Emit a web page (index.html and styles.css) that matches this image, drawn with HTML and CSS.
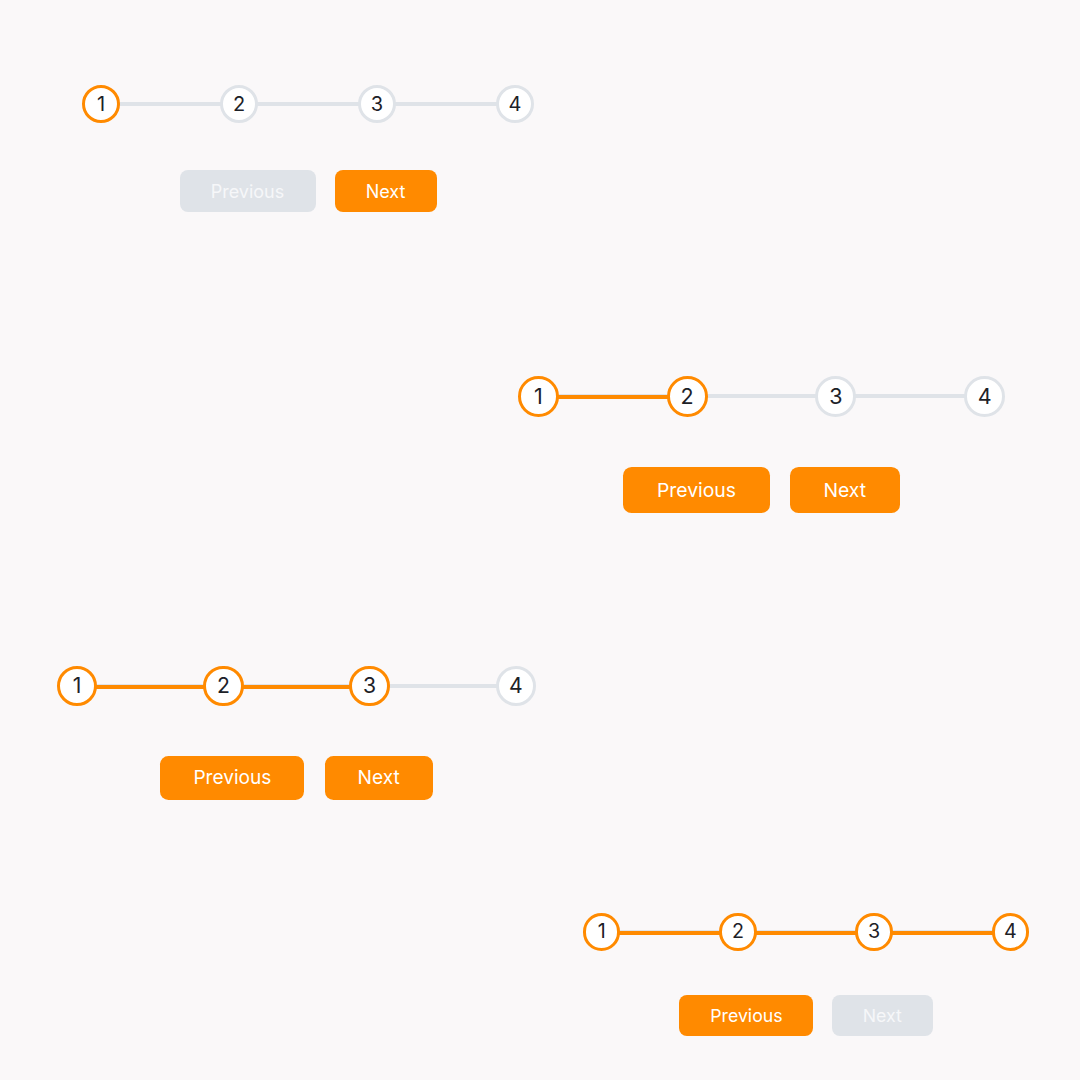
FILE: index.html
```html
<!DOCTYPE html>
<html lang="en">

<head>
    <meta charset="UTF-8">
    <meta name="viewport" content="width=device-width, initial-scale=1.0">
    <title>Progress steps</title>
    <link rel="stylesheet" href="styles.css">
</head>

<body>
    <main class="page">

        <!-- step 1 -->
        <section class="progress progress-one">
            <div class="steps">
                <div class="steps-track"><div class="steps-bar" style="width: 0%"></div></div>
                <div class="circle active">1</div>
                <div class="circle">2</div>
                <div class="circle">3</div>
                <div class="circle">4</div>
            </div>
            <div class="controls">
                <button class="btn btn-prev" disabled>Previous</button>
                <button class="btn btn-next">Next</button>
            </div>
        </section>

        <!-- step 2 -->
        <section class="progress progress-two">
            <div class="steps">
                <div class="steps-track"><div class="steps-bar" style="width: 33.333%"></div></div>
                <div class="circle active">1</div>
                <div class="circle active">2</div>
                <div class="circle">3</div>
                <div class="circle">4</div>
            </div>
            <div class="controls">
                <button class="btn btn-prev">Previous</button>
                <button class="btn btn-next">Next</button>
            </div>
        </section>

        <!-- step 3 -->
        <section class="progress progress-three">
            <div class="steps">
                <div class="steps-track"><div class="steps-bar" style="width: 66.666%"></div></div>
                <div class="circle active">1</div>
                <div class="circle active">2</div>
                <div class="circle active">3</div>
                <div class="circle">4</div>
            </div>
            <div class="controls">
                <button class="btn btn-prev">Previous</button>
                <button class="btn btn-next">Next</button>
            </div>
        </section>

        <!-- step 4 -->
        <section class="progress progress-four">
            <div class="steps">
                <div class="steps-track"><div class="steps-bar" style="width: 100%"></div></div>
                <div class="circle active">1</div>
                <div class="circle active">2</div>
                <div class="circle active">3</div>
                <div class="circle active">4</div>
            </div>
            <div class="controls">
                <button class="btn btn-prev">Previous</button>
                <button class="btn btn-next" disabled>Next</button>
            </div>
        </section>

    </main>
</body>

</html>
```

FILE: styles.css
```css
* {
    box-sizing: border-box;
}

body {
    margin: 0;
    background-color: #faf8f9;
    font-family: Inter, "Noto Sans", sans-serif;
    color: #1d2127;
}

.page {
    display: flex;
    flex-direction: column;
    align-items: flex-start;
    padding-top: 85px;
}

/* each block has its own size */
.progress {
    --s: 1;
    width: calc(452px * var(--s));
    display: flex;
    flex-direction: column;
    align-items: center;
}

.progress-one {
    margin-left: 82px;
}

.progress-two {
    --s: 1.075;
    width: 487px;
    margin-left: 518px;
    margin-top: 164px;
}

.progress-three {
    --s: 1.06;
    width: 479px;
    margin-left: 57px;
    margin-top: 153px;
}

.progress-four {
    --s: 0.985;
    width: 446px;
    margin-left: 583px;
    margin-top: 113px;
}

.progress-four .controls {
    margin-top: 44px;
}

.steps {
    position: relative;
    width: 100%;
    display: flex;
    justify-content: space-between;
    align-items: center;
}

.steps-track {
    position: absolute;
    top: 50%;
    left: calc(19px * var(--s));
    right: calc(19px * var(--s));
    height: 4px;
    margin-top: -2px;
    background-color: #dfe3e8;
}

.steps-bar {
    height: 4px;
    margin-top: 1px;
    background-color: #ff8a00;
}

.circle {
    position: relative;
    width: calc(38px * var(--s));
    height: calc(38px * var(--s));
    border-radius: 50%;
    border: 3px solid #dfe3e8;
    background-color: #fff;
    display: flex;
    justify-content: center;
    align-items: center;
    font-size: calc(20px * var(--s));
    line-height: 1;
}

.circle.active {
    border-color: #ff8a00;
}

.controls {
    display: flex;
    gap: calc(19px * var(--s));
    margin-top: calc(47px * var(--s));
}

.btn {
    height: calc(42px * var(--s));
    padding: 0 calc(30px * var(--s));
    border: none;
    border-radius: calc(8px * var(--s));
    background-color: #ff8a00;
    color: #fff;
    font-family: inherit;
    font-size: calc(18px * var(--s));
    font-weight: 400;
    cursor: pointer;
}

.btn-prev {
    min-width: calc(136px * var(--s));
}

.btn-next {
    min-width: calc(102px * var(--s));
}

.btn:disabled {
    background-color: #dfe3e8;
    color: #f6f7f9;
    cursor: not-allowed;
}
```
